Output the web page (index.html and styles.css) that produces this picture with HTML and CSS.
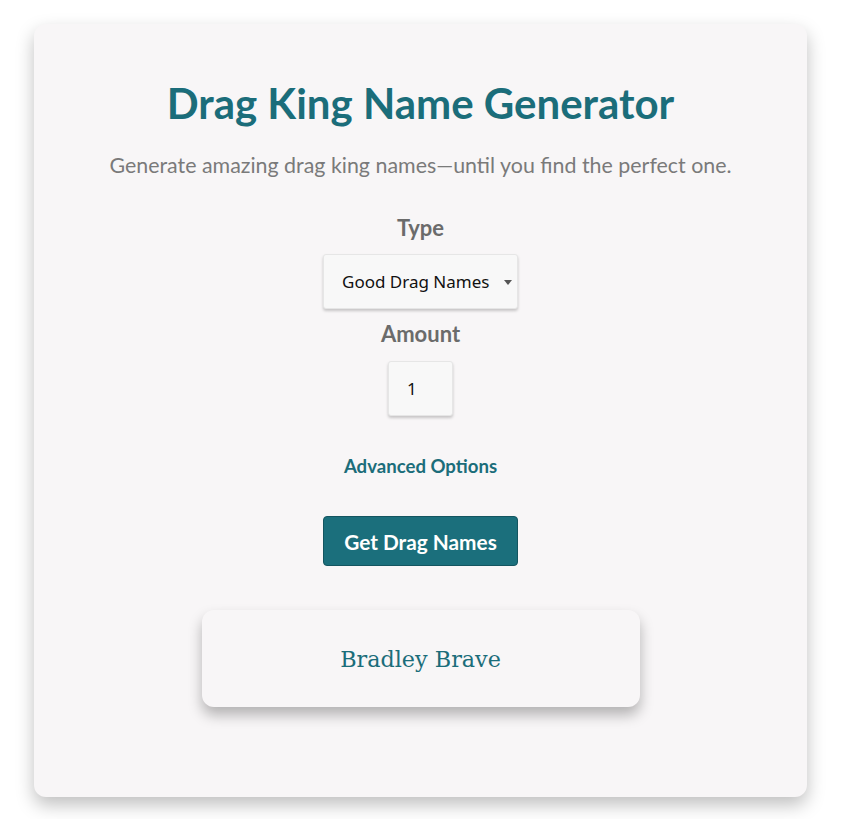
FILE: index.html
```html
<!DOCTYPE html>
<html>
<head>
<meta charset="utf-8">
<link rel="stylesheet" href="styles.css">
</head>
<body>
<main class="card">
  <h1 class="title">Drag King Name Generator</h1>
  <p class="subtitle">Generate amazing drag king names—until you find the perfect one.</p>
  <div class="field">
    <label class="label">Type</label>
    <div class="select">
      <span class="select-text">Good Drag Names</span>
      <svg class="caret" width="8" height="6" viewBox="0 0 8 6"><path d="M0 0 H8 L4 5 Z" fill="#555"/></svg>
    </div>
  </div>
  <div class="field">
    <label class="label">Amount</label>
    <div class="input">1</div>
  </div>
  <a class="advanced">Advanced Options</a>
  <button class="btn">Get Drag Names</button>
  <div class="result">
    <span class="result-name">Bradley Brave</span>
  </div>
</main>
</body>
</html>
```
FILE: styles.css
```css
html, body {
  margin: 0;
  padding: 0;
  background: #ffffff;
}
body {
  padding: 24px 43px 22px 34px;
  font-family: Lato, "Open Sans", sans-serif;
}
.card {
  background: #f8f6f7;
  border-radius: 12px;
  box-shadow: 0 8px 18px rgba(0, 0, 0, 0.25);
  height: 773px;
  box-sizing: border-box;
  display: flex;
  flex-direction: column;
  align-items: center;
  padding-top: 54px;
}
.title {
  margin: 0;
  font-size: 42px;
  font-weight: 700;
  color: #1b6d7a;
  line-height: 50px;
}
.subtitle {
  margin: 23px 0 0;
  font-size: 21.4px;
  color: #7a7a7a;
  line-height: 28px;
}
.field {
  display: flex;
  flex-direction: column;
  align-items: center;
}
.label {
  font-size: 22px;
  font-weight: 700;
  color: #6b6b6b;
  line-height: 26px;
  margin-top: 36px;
}
.field + .field .label {
  margin-top: 12px;
}
.select {
  margin-top: 13px;
  width: 195px;
  height: 55px;
  box-sizing: border-box;
  background: #f8f8f8;
  border: 1px solid #e6e6e6;
  border-radius: 3px;
  box-shadow: 0 2px 3px rgba(0, 0, 0, 0.2);
  display: flex;
  align-items: center;
  padding: 0 5px 0 18px;
  font-family: "Noto Sans", "Open Sans", sans-serif;
  font-size: 17px;
  color: #111;
}
.select-text {
  flex: 1;
}
.caret {
  margin-top: 3px;
}
.input {
  margin-top: 14px;
  width: 65px;
  height: 55px;
  box-sizing: border-box;
  background: #f8f8f8;
  border: 1px solid #e6e6e6;
  border-radius: 3px;
  box-shadow: 0 2px 3px rgba(0, 0, 0, 0.2);
  display: flex;
  align-items: center;
  padding-left: 18px;
  font-family: "Noto Sans", "Open Sans", sans-serif;
  font-size: 17px;
  color: #111;
}
.advanced {
  margin-top: 38px;
  font-size: 18.6px;
  font-weight: 700;
  color: #1b6d7a;
  line-height: 24px;
}
.btn {
  margin-top: 38px;
  width: 195px;
  height: 50px;
  background: #1b6f7c;
  border: 1px solid #145560;
  border-radius: 4px;
  color: #ffffff;
  font-family: Lato, "Open Sans", sans-serif;
  font-size: 20.8px;
  font-weight: 700;
  padding: 0;
}
.result {
  margin-top: 44px;
  width: 438px;
  height: 97px;
  background: #f8f6f7;
  border-radius: 12px;
  box-shadow: 0 8px 14px rgba(0, 0, 0, 0.28);
  display: flex;
  align-items: center;
  justify-content: center;
}
.result-name {
  font-family: "DejaVu Serif", Georgia, serif;
  font-size: 22.3px;
  color: #1b6d7a;
}
```
